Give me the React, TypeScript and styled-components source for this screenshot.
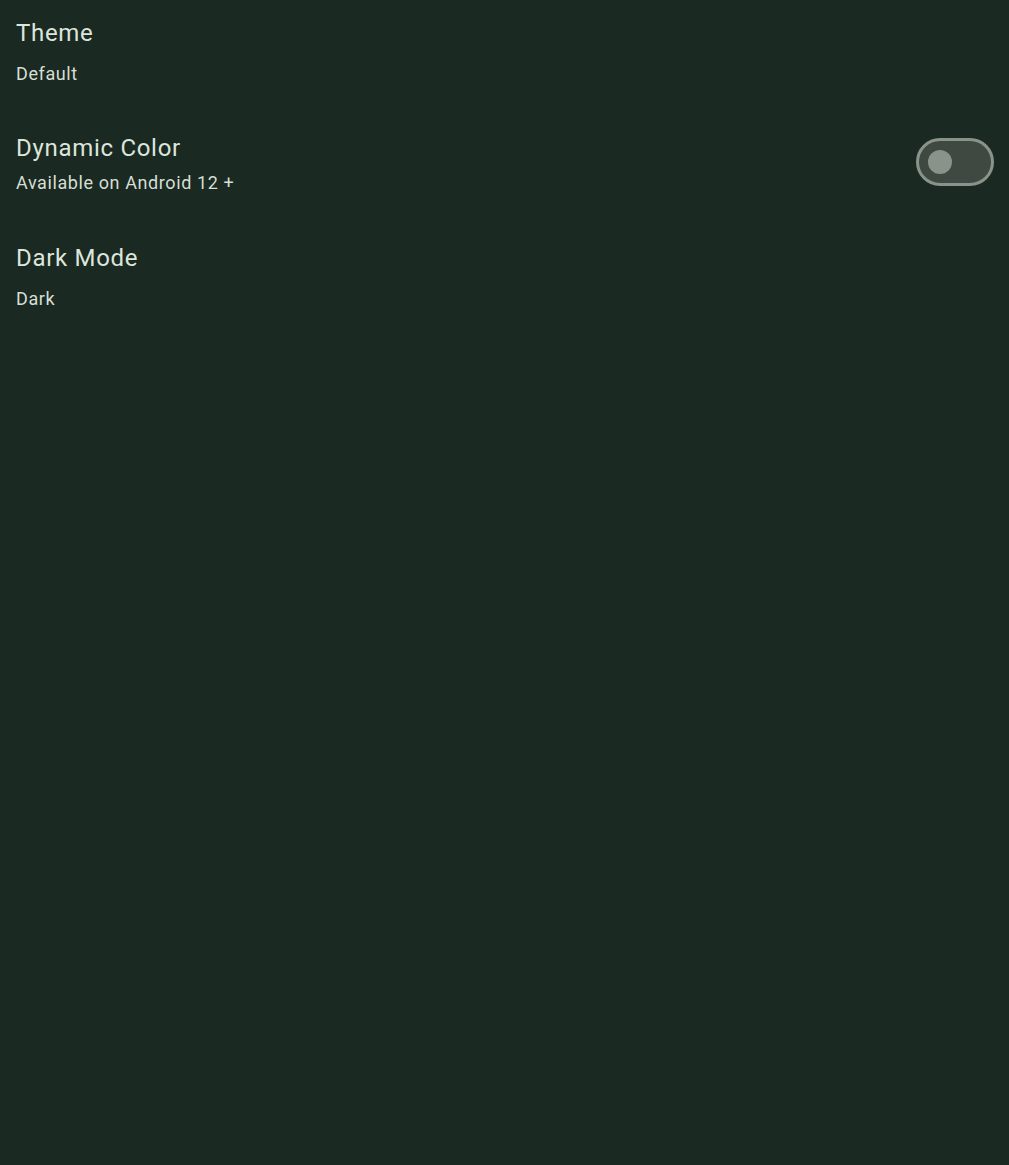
import styled, { createGlobalStyle } from "styled-components";

const GlobalStyle = createGlobalStyle`
  html, body {
    margin: 0;
    padding: 0;
    background: #1a2921;
  }
  body {
    font-family: Roboto, "Noto Sans", "Liberation Sans", sans-serif;
  }
`;

const Screen = styled.div`
  width: 100vw;
  min-height: 100vh;
  background: #1a2921;
  display: flex;
  flex-direction: column;
  gap: 46px;
  padding-top: 17px;
  box-sizing: border-box;
`;

const Item = styled.div<{ $withSwitch?: boolean }>`
  display: flex;
  align-items: center;
  padding: 0 15px ${(p) => (p.$withSwitch ? "1px" : "0")} 16px;
`;

const TextBlock = styled.div<{ $tight?: boolean }>`
  flex: 1;
  display: flex;
  flex-direction: column;
  gap: ${(p) => (p.$tight ? "7px" : "13px")};
`;

const Title = styled.div`
  font-size: 24px;
  line-height: 32px;
  letter-spacing: 0.7px;
  color: #dde5dc;
`;

const Subtitle = styled.div`
  font-size: 18px;
  line-height: 24px;
  letter-spacing: 0.6px;
  color: #d6ded5;
`;

const Track = styled.div<{ $on?: boolean }>`
  width: 78px;
  height: 48px;
  margin-bottom: 4px;
  box-sizing: border-box;
  border-radius: 24px;
  border: 3px solid #8a9389;
  background: #3f4942;
  display: flex;
  align-items: center;
  padding: 0 9px;
  justify-content: ${(p) => (p.$on ? "flex-end" : "flex-start")};
`;

const Thumb = styled.div`
  width: 24px;
  height: 24px;
  border-radius: 50%;
  background: #8a9389;
`;

function App() {
  return (
    <Screen>
      <GlobalStyle />
      <Item>
        <TextBlock>
          <Title>Theme</Title>
          <Subtitle>Default</Subtitle>
        </TextBlock>
      </Item>
      <Item $withSwitch>
        <TextBlock $tight>
          <Title>Dynamic Color</Title>
          <Subtitle>Available on Android 12 +</Subtitle>
        </TextBlock>
        <Track>
          <Thumb />
        </Track>
      </Item>
      <Item>
        <TextBlock>
          <Title>Dark Mode</Title>
          <Subtitle>Dark</Subtitle>
        </TextBlock>
      </Item>
    </Screen>
  );
}

export default App;
